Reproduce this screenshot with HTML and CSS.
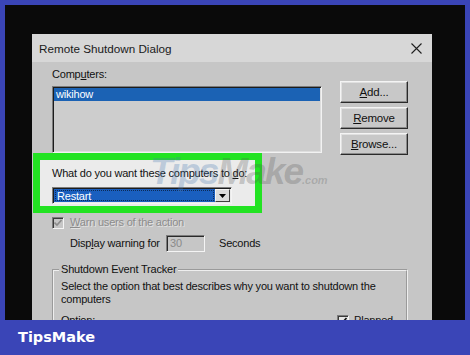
FILE: index.html
```html
<!DOCTYPE html>
<html lang="en">
<head>
<meta charset="utf-8">
<title>Remote Shutdown Dialog</title>
<link rel="stylesheet" href="styles.css">
</head>
<body>
<div class="screen">
  <div class="desk">
    <div class="dialog">
      <div class="titlebar">
        <span class="title">Remote Shutdown Dialog</span>
        <svg class="close" viewBox="0 0 11 11" width="11" height="11"><path d="M0.5 0.5 L10.5 10.5 M10.5 0.5 L0.5 10.5" stroke="#1e1e1e" stroke-width="1.1" fill="none"/></svg>
      </div>
      <div class="body">
        <div class="computers">
          <div class="left">
            <div class="label">Comp<u>u</u>ters:</div>
            <div class="listbox"><div class="item">wikihow</div></div>
          </div>
          <div class="buttons">
            <div class="btn"><u>A</u>dd...</div>
            <div class="btn"><u>R</u>emove</div>
            <div class="btn"><u>B</u>rowse...</div>
          </div>
        </div>
        <div class="highlight">
          <div class="label">What do you want these computers to <u>d</u>o:</div>
          <div class="combo">
            <div class="combo-val"><span class="focus">Restart</span></div>
            <div class="combo-btn"><svg viewBox="0 0 7 4" width="7" height="4"><path d="M0 0 H7 L3.5 4 Z" fill="#000"/></svg></div>
          </div>
        </div>
        <div class="check-row disabled">
          <span class="check"><svg viewBox="0 0 8 8" width="8" height="8"><path d="M0.5 3.5 L3 6 L7.5 1" stroke="#8c8c8c" stroke-width="1.6" fill="none"/></svg></span>
          <span class="dtext"><u>W</u>arn users of the action</span>
        </div>
        <div class="warn-row">
          <span class="warn-label">Disp<u>l</u>ay warning for</span>
          <span class="field">30</span>
          <span class="secs">Seconds</span>
        </div>
        <fieldset class="group">
          <legend>Shutdown Event Tracker</legend>
          <p class="desc">Select the option that best describes why you want to shutdown the computers</p>
          <div class="opt-row">
            <span>Option:</span>
            <span class="planned"><span class="check live"><svg viewBox="0 0 8 8" width="8" height="8"><path d="M0.5 3.5 L3 6 L7.5 1" stroke="#111" stroke-width="1.6" fill="none"/></svg></span><span>Planned</span></span>
          </div>
        </fieldset>
      </div>
    </div>
  </div>
  <div class="footer">TipsMake</div>
  <div class="wm"><span class="wm-tips">Tips</span><span class="wm-make">Make</span><span class="wm-com">.com</span></div>
</div>
</body>
</html>
```

FILE: styles.css
```css
* { box-sizing: border-box; margin: 0; padding: 0; }
html, body { width: 470px; height: 355px; overflow: hidden; }
body {
  background: #3a45b7;
  font-family: "Liberation Sans", Arial, sans-serif;
  font-size: 11px;
  line-height: 13px;
  color: #111;
  letter-spacing: -0.2px;
}
u { text-decoration: underline; text-underline-offset: 1px; }
.screen { position: relative; width: 470px; height: 355px; display: flex; flex-direction: column; }
.desk {
  margin: 5px 5px 0;
  height: 315px;
  background: #0a0a0a;
  padding: 29px 0 0 27px;
  overflow: hidden;
}
.dialog {
  width: 400px;
  height: 300px;
  background: #c6c6c6;
  display: flex;
  flex-direction: column;
}
.titlebar {
  height: 28px;
  flex: none;
  background: #d7d7d7;
  display: flex;
  align-items: center;
  justify-content: space-between;
  padding: 0 10px 0 7px;
}
.title { font-family: "Liberation Sans", Arial, sans-serif; font-size: 11.7px; color: #1a1a1a; letter-spacing: 0; padding-top: 1px; }
.close { display: block; }
.body { padding: 6px 0 0 20px; }
.computers { display: flex; height: 85px; align-items: flex-start; }
.left { width: 270px; }
.listbox {
  margin-top: 5px;
  height: 67px;
  background: #cdcdcd;
  border: 1px solid;
  border-color: #7c7c7c #f2f2f2 #f2f2f2 #7c7c7c;
  box-shadow: inset 1px 1px 0 #1c1c1c, inset -1px -1px 0 #dedede;
  padding: 1px;
}
.item { height: 13px; background: #1b62b4; color: #fff; padding-left: 2px; }
.buttons { margin-left: 18px; padding-top: 13px; display: flex; flex-direction: column; gap: 4px; }
.btn {
  width: 68px;
  height: 22px;
  display: flex;
  align-items: center;
  justify-content: center;
  background: #c8c8c8;
  border: 1px solid;
  border-color: #f4f4f4 #2a2a2a #2a2a2a #f4f4f4;
  box-shadow: inset -1px -1px 0 #8a8a8a, inset 1px 1px 0 #e0e0e0;
  font-size: 11.5px;
}
.highlight {
  margin-left: -19px;
  width: 229px;
  border: 7px solid #22e322;
  background: #ebebeb;
  padding: 7px 0 2px 12px;
}
.highlight .label { margin-bottom: 7px; }
.combo {
  width: 180px;
  height: 17px;
  display: flex;
  border: 1px solid;
  border-color: #7c7c7c #f4f4f4 #f4f4f4 #7c7c7c;
  box-shadow: inset 1px 1px 0 #1c1c1c;
  padding: 1px;
  background: #ebebeb;
}
.combo-val { flex: 1; background: #1a5fbf; padding: 1px; }
.focus {
  display: block;
  height: 100%;
  border: 1px dotted #0d2a55;
  color: #fff;
  line-height: 11px;
  padding-left: 1px;
}
.combo-btn {
  width: 15px;
  display: flex;
  align-items: center;
  justify-content: center;
  background: #dcdcdc;
  border: 1px solid;
  border-color: #f4f4f4 #404040 #404040 #f4f4f4;
}
.combo-btn svg { display: block; }
.check-row { margin-top: 3px; height: 13px; display: flex; align-items: center; gap: 6px; }
.check {
  width: 12px;
  height: 12px;
  display: flex;
  align-items: center;
  justify-content: center;
  border: 1px solid;
  border-color: #7c7c7c #f4f4f4 #f4f4f4 #7c7c7c;
  box-shadow: inset 1px 1px 0 #3a3a3a;
  background: #c6c6c6;
}
.check.live { background: #e6e6e6; }
.check svg { display: block; }
.dtext { color: #8c8c8c; text-shadow: 1px 1px 0 #e2e2e2; }
.warn-row { margin-top: 6px; height: 17px; display: flex; align-items: center; padding-left: 18px; }
.warn-label { width: 96px; }
.field {
  width: 39px;
  height: 17px;
  border: 1px solid;
  border-color: #7c7c7c #f4f4f4 #f4f4f4 #7c7c7c;
  box-shadow: inset 1px 1px 0 #2a2a2a;
  color: #8a8a8a;
  padding: 1px 0 0 3px;
}
.secs { margin-left: 14px; }
.group {
  margin-top: 11px;
  width: 356px;
  border: 2px groove #eeeeee;
  padding: 4px 7px 0 7px;
}
.group legend { padding: 0 2px; margin-left: -2px; }
.desc { width: 338px; }
.opt-row { margin-top: 8px; display: flex; justify-content: space-between; align-items: center; padding-right: 6px; }
.planned { display: flex; align-items: center; gap: 5px; }
.footer {
  height: 35px;
  display: flex;
  align-items: center;
  padding-left: 18px;
  color: #fff;
  font-family: "DejaVu Sans", Verdana, sans-serif;
  font-weight: bold;
  font-size: 14.5px;
  letter-spacing: 0;
}
.wm {
  position: absolute;
  left: 150px;
  top: 152px;
  font-family: "Liberation Sans", Arial, sans-serif;
  font-weight: bold;
  font-style: italic;
  font-size: 37px;
  line-height: 40px;
  letter-spacing: -2px;
  pointer-events: none;
}
.wm-tips { color: rgba(70, 120, 175, 0.28); }
.wm-make { color: rgba(80, 80, 80, 0.27); }
.wm-com { font-size: 11px; letter-spacing: 0; color: rgba(80, 80, 80, 0.25); }
```
